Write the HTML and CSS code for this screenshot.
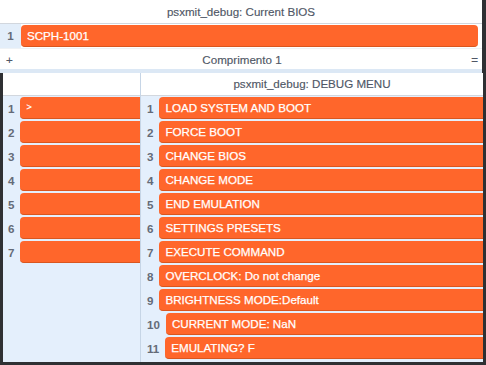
FILE: index.html
```html
<!DOCTYPE html>
<html lang="en">
<head>
	<meta charset="UTF-8">
	<title>psxmit_debug</title>
	<link rel="stylesheet" href="styles.css">
</head>
<body>
	<div id="bios">
		<div class="ttl">psxmit_debug: Current BIOS</div>
		<div class="row"><span class="num">1</span><div class="bar">SCPH-1001</div></div>
		<div class="foot"><span>+</span><span>Comprimento 1</span><span>=</span></div>
	</div>
	<div id="menu">
		<div class="col">
			<div class="ttl"></div>
			<ul class="list">
				<li><span class="n">1</span><div class="b small">&gt;</div></li>
				<li><span class="n">2</span><div class="b"></div></li>
				<li><span class="n">3</span><div class="b"></div></li>
				<li><span class="n">4</span><div class="b"></div></li>
				<li><span class="n">5</span><div class="b"></div></li>
				<li><span class="n">6</span><div class="b"></div></li>
				<li><span class="n">7</span><div class="b"></div></li>
			</ul>
		</div>
		<div class="col">
			<div class="ttl">psxmit_debug: DEBUG MENU</div>
			<ul class="list r">
				<li><span class="n">1</span><div class="b">LOAD SYSTEM AND BOOT</div></li>
				<li><span class="n">2</span><div class="b">FORCE BOOT</div></li>
				<li><span class="n">3</span><div class="b">CHANGE BIOS</div></li>
				<li><span class="n">4</span><div class="b">CHANGE MODE</div></li>
				<li><span class="n">5</span><div class="b">END EMULATION</div></li>
				<li><span class="n">6</span><div class="b">SETTINGS PRESETS</div></li>
				<li><span class="n">7</span><div class="b">EXECUTE COMMAND</div></li>
				<li><span class="n">8</span><div class="b">OVERCLOCK: Do not change</div></li>
				<li><span class="n">9</span><div class="b">BRIGHTNESS MODE:Default</div></li>
				<li><span class="n">10</span><div class="b">CURRENT MODE: NaN</div></li>
				<li><span class="n">11</span><div class="b">EMULATING? F</div></li>
			</ul>
		</div>
	</div>
</body>
</html>
```
FILE: styles.css
```css
*{margin: 0;padding: 0;list-style: none;box-sizing: border-box;}
body{width: 486px;height: 365px;overflow: hidden;background: #2f3033;font-family: "Liberation Sans", Arial, sans-serif;font-size: 11.6px;}
.ttl{height: 24px;line-height: 23px;text-align: center;color: #4f5766;background: #fff;border-bottom: 1px solid #d2d7de;-webkit-text-stroke: 0.15px #4f5766;}
#bios{width: 482px;background: #fff;}
#bios .row{display: flex;height: 24px;}
#bios .num{width: 21px;background: #e3eefa;text-align: center;line-height: 24px;font-weight: bold;color: #646b78;}
#bios .bar{flex: 1;margin: 1px 4px 1px 0;height: 22px;line-height: 21px;padding-left: 6px;background: #ff662b;border-bottom: 1px solid #d9561f;border-radius: 4px;color: #fff;-webkit-text-stroke: 0.25px #fff;}
#bios .foot{display: flex;justify-content: space-between;height: 25px;padding: 2px 4px 0 6px;line-height: 18px;color: #4f5766;border-top: 1px solid #eef2f6;border-bottom: 4px solid #dce8f5;-webkit-text-stroke: 0.15px #4f5766;}
#menu{display: grid;grid-template-columns: 137px 1fr;column-gap: 1px;margin: 0 3px;height: 289px;background: #c6d5e6;}
.col{overflow: hidden;background: #e4effc;}
.col .ttl{height: 23px;line-height: 22px;}
.list{padding-top: 1px;}
.list li{display: flex;align-items: center;height: 22px;margin-bottom: 2px;}
.list .n{padding: 0 6px 0 5px;font-weight: bold;color: #646b78;}
.list.r .n{padding-left: 6px;}
.list .b{flex: 1;height: 22px;line-height: 21px;margin-right: -6px;padding-left: 6px;background: #ff662b;border-bottom: 1px solid #d9561f;border-radius: 4px;color: #fff;white-space: nowrap;-webkit-text-stroke: 0.25px #fff;}
.list .small{font-size: 9px;}
```
